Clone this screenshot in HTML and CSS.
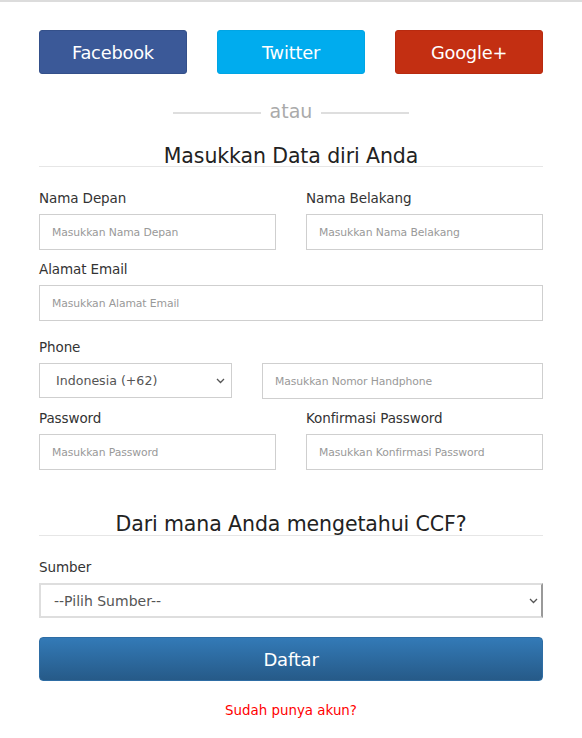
FILE: index.html
```html
<!DOCTYPE html>
<html lang="id">
<head>
<meta charset="utf-8">
<title>Daftar</title>
<link rel="stylesheet" href="styles.css">
</head>
<body>
<div class="page">
  <div class="social">
    <a class="sbtn fb">Facebook</a>
    <a class="sbtn tw">Twitter</a>
    <a class="sbtn gp">Google+</a>
  </div>
  <div class="divider"><span class="dline"></span><span class="dtext">atau</span><span class="dline"></span></div>

  <h2 class="section-title">Masukkan Data diri Anda</h2>

  <div class="row two">
    <div class="field">
      <label class="lbl">Nama Depan</label>
      <div class="input">Masukkan Nama Depan</div>
    </div>
    <div class="field">
      <label class="lbl">Nama Belakang</label>
      <div class="input">Masukkan Nama Belakang</div>
    </div>
  </div>

  <div class="field">
    <label class="lbl">Alamat Email</label>
    <div class="input">Masukkan Alamat Email</div>
  </div>

  <div class="field phone-field">
    <label class="lbl">Phone</label>
    <div class="phone-row">
      <div class="select country"><span>Indonesia (+62)</span>
        <svg class="chev" width="9" height="6" viewBox="0 0 9 6"><path d="M1 1l3.5 3.5L8 1" fill="none" stroke="#555" stroke-width="1.3"/></svg>
      </div>
      <div class="input">Masukkan Nomor Handphone</div>
    </div>
  </div>

  <div class="row two">
    <div class="field">
      <label class="lbl">Password</label>
      <div class="input">Masukkan Password</div>
    </div>
    <div class="field">
      <label class="lbl">Konfirmasi Password</label>
      <div class="input">Masukkan Konfirmasi Password</div>
    </div>
  </div>

  <h2 class="section-title big">Dari mana Anda mengetahui CCF?</h2>

  <div class="field">
    <label class="lbl">Sumber</label>
    <div class="select source"><span>--Pilih Sumber--</span>
      <svg class="chev" width="9" height="6" viewBox="0 0 9 6"><path d="M1 1l3.5 3.5L8 1" fill="none" stroke="#555" stroke-width="1.3"/></svg>
    </div>
  </div>

  <button class="submit">Daftar</button>

  <p class="login"><a>Sudah punya akun?</a></p>
</div>
</body>
</html>
```

FILE: styles.css
```css
html, body {
  margin: 0;
  padding: 0;
  background: #fff;
}
body {
  font-family: "DejaVu Sans", "Open Sans", sans-serif;
  color: #333;
  border-top: 2px solid #dcdcdc;
}
.page {
  width: 504px;
  padding: 28px 0 0 0;
  margin-left: 39px;
}
.social {
  display: flex;
  justify-content: space-between;
}
.sbtn {
  width: 148px;
  height: 44px;
  border-radius: 3px;
  color: #fff;
  display: flex;
  align-items: center;
  justify-content: center;
  font-size: 17.8px;
  letter-spacing: -0.2px;
  box-sizing: border-box;
}
.fb { background: #3b5998; border: 1px solid #34508a; }
.tw { background: #00acee; border: 1px solid #00a5e4; }
.gp { background: #c32f12; border: 1px solid #b82a0f; }

.divider {
  display: flex;
  align-items: center;
  justify-content: center;
  margin-top: 25px;
  height: 24px;
}
.dline {
  width: 88px;
  height: 2px;
  background: #dedede;
  margin-top: 4px;
}
.dtext {
  color: #aaa;
  font-size: 19px;
  margin: 0 9px;
}
.section-title {
  margin: 23px 0 0 0;
  font-weight: normal;
  font-size: 20.5px;
  text-align: center;
  color: #222;
  line-height: 20px;
  border-bottom: 1px solid #e6e6e6;
  padding-bottom: 0;
  letter-spacing: -0.1px;
}
.section-title.big {
  font-size: 20.5px;
  margin-top: 33px;
  line-height: 22px;
}
.row.two {
  display: flex;
  gap: 30px;
}
.row.two .field { flex: 1; }
.lbl {
  display: block;
  font-size: 13.5px;
  color: #333;
  height: 18px;
  line-height: 18px;
  margin-bottom: 7px;
  letter-spacing: -0.1px;
}
.section-title + .row .lbl { margin-top: 22px; }
.input {
  height: 36px;
  box-sizing: border-box;
  border: 1px solid #cfcfcf;
  font-size: 10.8px;
  color: #999;
  padding-left: 12px;
  display: flex;
  align-items: center;
  letter-spacing: -0.1px;
  margin-bottom: 10px;
}
.phone-field .lbl { margin-top: 17px; }
.phone-row {
  display: flex;
  gap: 30px;
}
.phone-row .input { flex: 1; }
.select {
  box-sizing: border-box;
  height: 35px;
  border: 1px solid #cfcfcf;
  display: flex;
  align-items: center;
  justify-content: space-between;
  color: #555;
  font-size: 14px;
}
.country {
  width: 193px;
  padding: 0 6px 0 16px;
  margin-bottom: 10px;
  font-size: 12.6px;
}
.source {
  border: 2px solid #dedede;
  border-right-color: #999;
  padding: 0 3px 0 13px;
  font-size: 14px;
  color: #555;
}
.section-title.big + .field .lbl { margin-top: 22px; }
.submit {
  display: block;
  width: 100%;
  margin-top: 19px;
  height: 44px;
  border-radius: 4px;
  border: 1px solid #2e6da4;
  background: linear-gradient(#337ab7, #265a88);
  color: #fff;
  font-family: inherit;
  font-size: 18px;
  letter-spacing: -0.2px;
}
.login {
  text-align: center;
  margin: 22px 0 0 0;
  font-size: 13.4px;
}
.login a { color: #f00; }
```
